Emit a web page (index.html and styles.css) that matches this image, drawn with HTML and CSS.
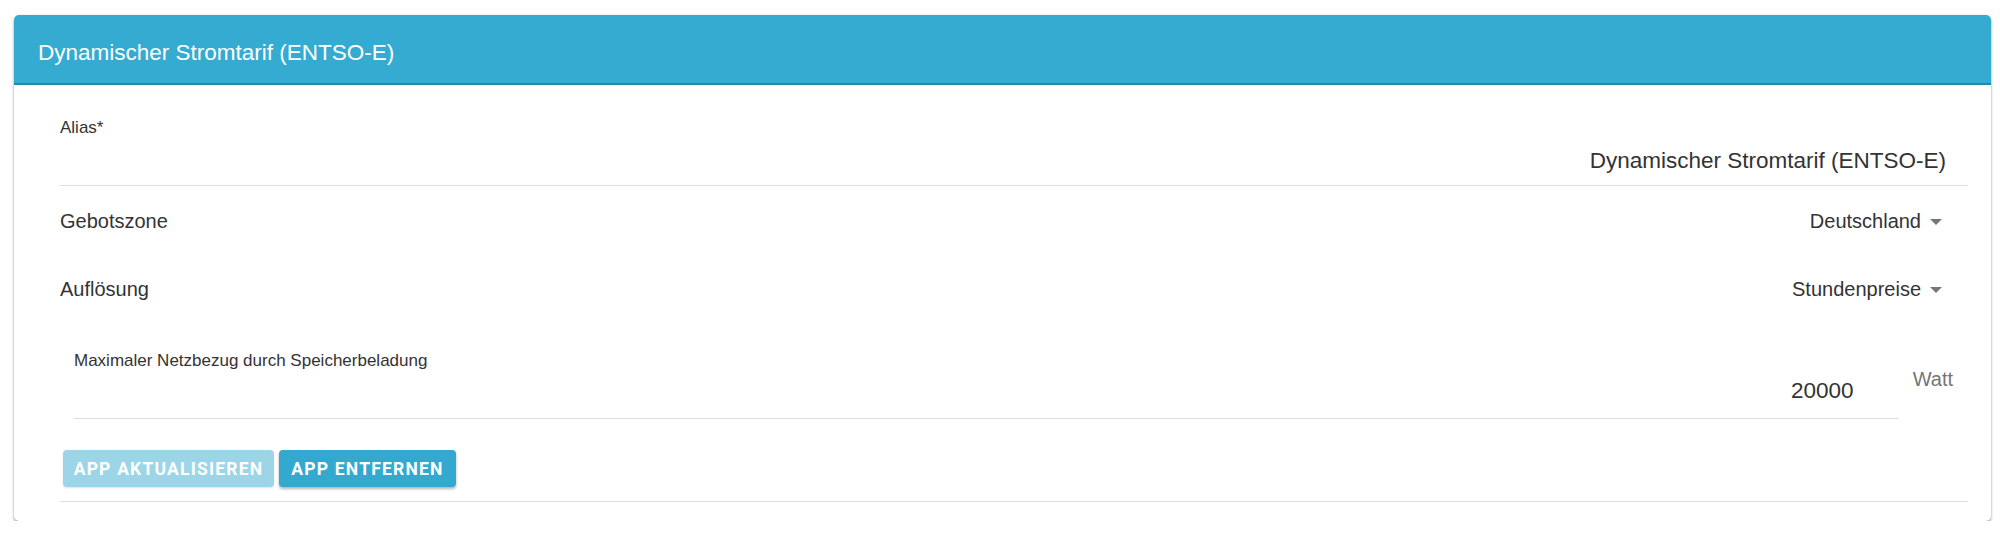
FILE: index.html
```html
<!DOCTYPE html>
<html lang="de">
<head>
<meta charset="utf-8">
<title>Dynamischer Stromtarif (ENTSO-E)</title>
<link rel="stylesheet" href="styles.css">
</head>
<body>
<section class="card">
  <header class="card-header">Dynamischer Stromtarif (ENTSO-E)</header>
  <div class="card-body">
    <div class="field">
      <label class="field-label">Alias*</label>
      <div class="field-value">Dynamischer Stromtarif (ENTSO-E)</div>
    </div>
    <div class="selects">
      <div class="select-row">
        <span class="select-label">Gebotszone</span>
        <span class="select-value">Deutschland<span class="arrow"></span></span>
      </div>
      <div class="select-row">
        <span class="select-label">Auflösung</span>
        <span class="select-value">Stundenpreise<span class="arrow"></span></span>
      </div>
    </div>
    <div class="number-row">
      <div class="field number-field">
        <label class="field-label">Maximaler Netzbezug durch Speicherbeladung</label>
        <div class="field-value number-value">20000</div>
      </div>
      <span class="suffix">Watt</span>
    </div>
    <div class="actions">
      <button class="btn btn-disabled" type="button">APP AKTUALISIEREN</button>
      <button class="btn btn-primary" type="button">APP ENTFERNEN</button>
    </div>
  </div>
</section>
</body>
</html>
```
FILE: styles.css
```css
html, body {
  margin: 0;
  padding: 0;
  background: #ffffff;
}

body {
  font-family: "Liberation Sans", Arial, sans-serif;
  color: #333333;
}

.card {
  margin: 15px 9px 0 14px;
  background: #ffffff;
  border-radius: 5px;
  box-shadow: 0 2px 3px rgba(0, 0, 0, 0.35), 0 0 2px rgba(0, 0, 0, 0.12);
}

.card-header {
  background: #36abd1;
  color: #ffffff;
  font-size: 22.5px;
  line-height: 30px;
  padding: 23px 24px 15px 24px;
  border-bottom: 2px solid #1f88ac;
  border-radius: 5px 5px 0 0;
}

.card-body {
  padding: 0 23px 19px 46px;
}

.field {
  display: flex;
  flex-direction: column;
  padding-top: 33px;
  border-bottom: 1px solid #dedede;
}

.field-label {
  font-size: 17px;
  line-height: 20px;
  color: #333333;
}

.field-value {
  font-size: 22.5px;
  line-height: 30px;
  text-align: right;
  padding: 8px 22px 9px 0;
  color: #333333;
}

.selects {
  padding-top: 1px;
}

.select-row {
  height: 68px;
  display: flex;
  align-items: center;
  justify-content: space-between;
  font-size: 20px;
  color: #333333;
}

.select-value {
  display: flex;
  align-items: center;
}

.arrow {
  width: 0;
  height: 0;
  border-left: 6px solid transparent;
  border-right: 6px solid transparent;
  border-top: 6px solid #777777;
  margin: 2px 26px 0 9px;
}

.number-row {
  display: flex;
  align-items: flex-start;
  padding-left: 14px;
}

.number-field {
  flex: 1;
  padding-top: 28px;
}

.number-value {
  padding: 5px 44px 12px 0;
}

.suffix {
  font-size: 20px;
  line-height: 24px;
  color: #757575;
  margin: 44px 15px 0 15px;
}

.actions {
  display: flex;
  gap: 5px;
  padding: 31px 0 14px 3px;
  border-bottom: 1px solid #dedede;
}

.btn {
  height: 37px;
  border: none;
  border-radius: 4px;
  color: #ffffff;
  font-family: Roboto, "Liberation Sans", sans-serif;
  font-weight: 700;
  font-size: 17.5px;
  letter-spacing: 1.2px;
  padding: 0 8px;
  cursor: pointer;
}

.btn-disabled {
  width: 211px;
  background: #9cd5e8;
  box-shadow: 0 1px 2px rgba(0, 0, 0, 0.12);
}

.btn-primary {
  width: 177px;
  background: #33a9cf;
  box-shadow: 0 2px 3px rgba(0, 0, 0, 0.3);
}
```
